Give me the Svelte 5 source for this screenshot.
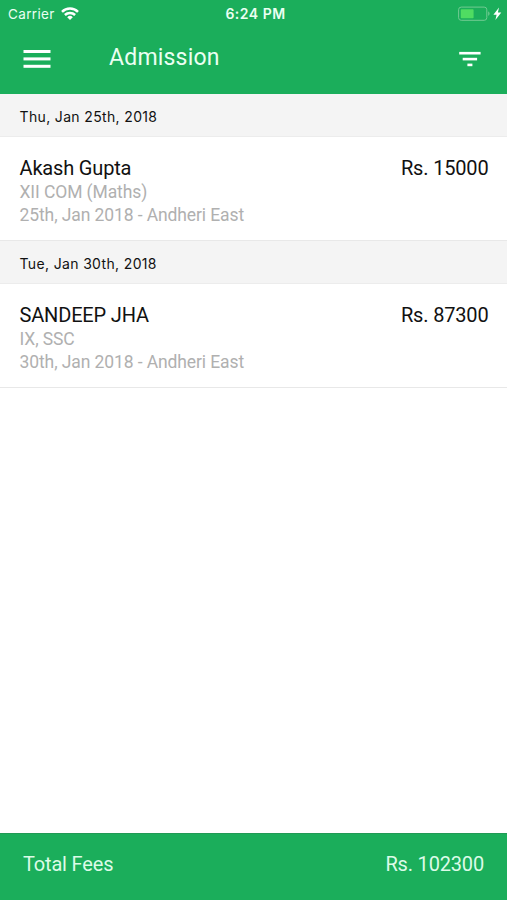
<script>
	const groups = [
		{
			date: 'Thu, Jan 25th, 2018',
			entries: [
				{ name: 'Akash Gupta', course: 'XII COM (Maths)', info: '25th, Jan 2018 - Andheri East', fees: 15000 }
			]
		},
		{
			date: 'Tue, Jan 30th, 2018',
			entries: [
				{ name: 'SANDEEP JHA', course: 'IX, SSC', info: '30th, Jan 2018 - Andheri East', fees: 87300 }
			]
		}
	];

	const total = groups.flatMap((g) => g.entries).reduce((sum, e) => sum + e.fees, 0);
</script>

<div class="screen">
	<header>
		<div class="status">
			<div class="carrier">
				<span>Carrier</span>
				<svg width="18" height="14" viewBox="0 0 18 14" fill="none" stroke="#fff" stroke-width="2.5">
					<path d="M1 4.8a11.4 11.4 0 0 1 16 0" />
					<path d="M3.9 8a7.3 7.3 0 0 1 10.2 0" />
					<path d="M9 13L6.2 10.2a4 4 0 0 1 5.6 0z" fill="#fff" stroke="none" />
				</svg>
			</div>
			<span class="time">6:24 PM</span>
			<div class="battery">
				<svg width="45" height="16" viewBox="0 0 45 16">
					<rect x="0.6" y="1.1" width="28.2" height="13.2" rx="2.6" fill="none" stroke="#72cb93" stroke-width="1" />
					<rect x="2.8" y="3.2" width="12.8" height="9" rx="0.8" fill="#4fdc62" />
					<path d="M30.2 5.6c1.8.5 1.8 3.7 0 4.2z" fill="#72cb93" />
					<path d="M41 1.6L35.4 8.7h3.2L37.4 14l5.9-7.4h-3.4z" fill="#fff" />
				</svg>
			</div>
		</div>
		<div class="toolbar">
			<svg class="menu" width="28" height="20" viewBox="0 0 28 20" fill="#fff">
				<rect x="0.5" y="1" width="27" height="3" />
				<rect x="0.5" y="8.4" width="27" height="3" />
				<rect x="0.5" y="15.8" width="27" height="3" />
			</svg>
			<h1>Admission</h1>
			<svg width="22" height="16" viewBox="0 0 22 16" fill="#fff">
				<rect x="0.2" y="0.9" width="21.4" height="2.6" />
				<rect x="3.7" y="6.8" width="14.4" height="2.6" />
				<rect x="8.4" y="12.6" width="5" height="2.6" />
			</svg>
		</div>
	</header>

	<main>
		{#each groups as group}
			<h2>{group.date}</h2>
			{#each group.entries as entry}
				<div class="entry">
					<div>
						<p class="name">{entry.name}</p>
						<p class="detail">{entry.course}</p>
						<p class="detail">{entry.info}</p>
					</div>
					<span class="fees">Rs. {entry.fees}</span>
				</div>
			{/each}
		{/each}
	</main>

	<footer>
		<span>Total Fees</span>
		<span>Rs. {total}</span>
	</footer>
</div>

<style>
	:global(body) {
		margin: 0;
	}
	.screen {
		display: flex;
		flex-direction: column;
		height: 900px;
		background: #fff;
		font-family: Roboto, sans-serif;
		color: #111;
	}
	h1,
	h2,
	p {
		margin: 0;
		font-weight: 400;
		white-space: nowrap;
	}
	svg {
		display: block;
		flex: none;
	}
	header {
		height: 94px;
		box-sizing: border-box;
		background: #1bae5b;
		color: #eafff2;
	}
	.status {
		display: grid;
		grid-template-columns: 1fr auto 1fr;
		align-items: center;
		height: 27px;
		padding: 0 4px 0 8px;
		font-family: Inter, sans-serif;
		font-size: 13.5px;
	}
	.carrier {
		display: flex;
		align-items: center;
		gap: 6px;
		letter-spacing: 0.35px;
	}
	.time {
		font-size: 14px;
		font-weight: 600;
		letter-spacing: 0.5px;
	}
	.battery {
		justify-self: end;
	}
	.toolbar {
		display: flex;
		align-items: center;
		height: 64px;
		padding: 0 26px 0 23px;
	}
	h1 {
		flex: 1;
		margin-left: 58px;
		font-size: 23px;
		line-height: 28px;
		letter-spacing: 0.2px;
		padding-bottom: 3px;
	}
	main {
		flex: 1;
	}
	h2 {
		height: 42px;
		border-bottom: 1px solid #ececec;
		padding-left: 19.5px;
		background: #f4f4f4;
		font-family: Inter, sans-serif;
		font-size: 14px;
		line-height: 45px;
		letter-spacing: 0.35px;
	}
	.entry {
		display: flex;
		justify-content: space-between;
		height: 103px;
		border-bottom: 1px solid #e8e8e8;
		padding: 0 18.5px 0 19.5px;
	}
	.name,
	.fees {
		padding-top: 18px;
		font-size: 20px;
		line-height: 26px;
		letter-spacing: -0.17px;
	}
	.detail {
		font-size: 17.5px;
		line-height: 23px;
		letter-spacing: -0.1px;
		color: #b0b0b0;
	}
	footer {
		display: flex;
		justify-content: space-between;
		height: 67px;
		box-sizing: border-box;
		border-top: 1px solid #219a55;
		padding: 0 23px;
		background: #1bae5b;
		color: #dcfbe8;
		font-size: 20px;
		line-height: 60px;
		letter-spacing: -0.17px;
	}
</style>
